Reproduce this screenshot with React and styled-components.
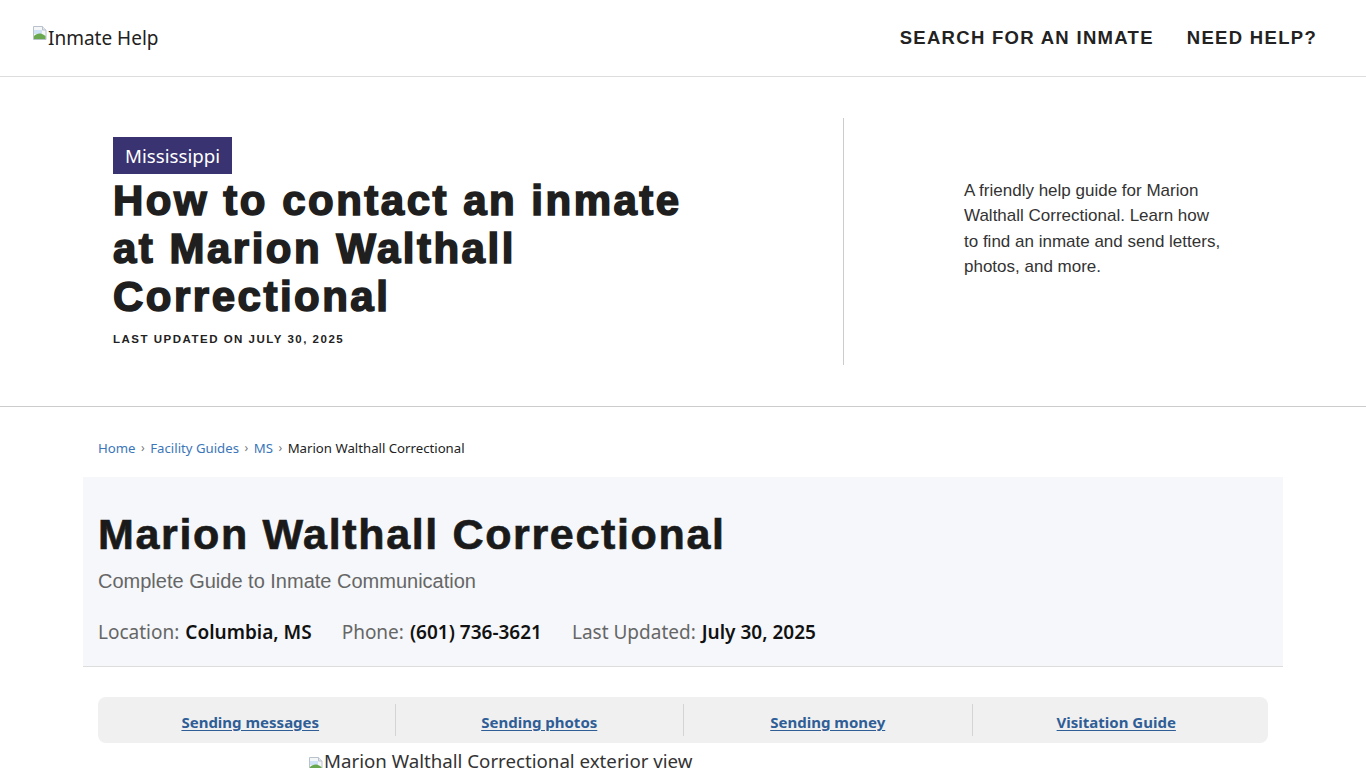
import React from "react";
import styled, { createGlobalStyle } from "styled-components";

const Global = createGlobalStyle`
  * { box-sizing: border-box; }
  html, body { margin: 0; padding: 0; background: #fff; }
  body { font-family: "Noto Sans", "Open Sans", sans-serif; color: #222; overflow: hidden; }
`;

const SEGOE = `"Noto Sans", "Open Sans", sans-serif`;
const ARIAL = `"Liberation Sans", Arial, sans-serif`;

const Header = styled.header`
  height: 77px;
  border-bottom: 1px solid #ddd;
  display: flex;
  align-items: center;
  justify-content: space-between;
  padding: 0 49px 0 32px;
`;

const Logo = styled.a`
  display: flex;
  align-items: flex-start;
  font-family: ${SEGOE};
  font-size: 19px;
  color: #222;
  text-decoration: none;
  margin-top: -1px;
`;

const Nav = styled.nav`
  display: flex;
  gap: 33px;
`;

const NavLink = styled.a`
  font-family: ${ARIAL};
  font-weight: 700;
  font-size: 18.5px;
  letter-spacing: 1.3px;
  color: #222;
  text-decoration: none;
  text-transform: uppercase;
`;

const Hero = styled.section`
  border-bottom: 1px solid #ccc;
  padding: 41px 0 41px;
`;

const HeroInner = styled.div`
  width: 1140px;
  margin: 0 auto;
  display: grid;
  grid-template-columns: 731px 1fr;
  min-height: 247px;
`;

const HeroLeft = styled.div`
  display: flex;
  flex-direction: column;
  justify-content: center;
  align-items: flex-start;
  border-right: 1px solid #ccc;
`;

const Tag = styled.span`
  background: #3a3371;
  color: #fff;
  font-family: ${SEGOE};
  font-size: 18.7px;
  padding: 0 12px 0 12px;
  height: 37px;
  line-height: 37px;
`;

const HeroTitle = styled.h1`
  margin: 3px 0 0;
  font-family: ${ARIAL};
  font-weight: 700;
  font-size: 42px;
  line-height: 48px;
  letter-spacing: 2.5px;
  -webkit-text-stroke: 1.6px #1f1f1f;
  color: #1f1f1f;
  width: 610px;
`;

const Updated = styled.div`
  margin-top: 11px;
  font-family: ${ARIAL};
  font-weight: 700;
  font-size: 11.5px;
  line-height: 14px;
  letter-spacing: 1.5px;
  color: #222;
  text-transform: uppercase;
`;

const HeroRight = styled.div`
  display: flex;
  align-items: center;
  padding-left: 120px;
`;

const HeroText = styled.p`
  margin: 0 0 26px;
  font-family: ${ARIAL};
  font-size: 17px;
  line-height: 25.5px;
  color: #333;
  width: 260px;
`;

const Main = styled.main`
  width: 1200px;
  margin: 0 auto;
`;

const Crumbs = styled.nav`
  padding: 32px 15px 0;
  height: 70px;
  font-family: ${SEGOE};
  font-size: 13.2px;
  color: #222;
  display: flex;
  gap: 5.5px;
  align-items: flex-start;
`;

const Crumb = styled.a`
  color: #3b76b8;
  text-decoration: none;
`;

const Sep = styled.span`
  color: #777;
  font-size: 12px;
`;

const Card = styled.div`
  background: #f5f7fa;
  border-bottom: 1px solid #ddd;
  padding: 33px 15px 19px;
`;

const Title = styled.h2`
  margin: 0;
  font-family: ${ARIAL};
  font-weight: 700;
  font-size: 43px;
  line-height: 48px;
  letter-spacing: 1.65px;
  -webkit-text-stroke: 0.7px #1a1a1a;
  color: #1a1a1a;
`;

const Subtitle = styled.p`
  margin: 9px 0 0;
  font-family: ${ARIAL};
  font-size: 20px;
  line-height: 28px;
  color: #666;
`;

const Meta = styled.div`
  display: flex;
  gap: 30px;
  margin-top: 22px;
  font-family: ${SEGOE};
  font-size: 19px;
  line-height: 30px;
`;

const MetaItem = styled.div`
  display: flex;
  gap: 6px;
`;

const MetaLabel = styled.span`
  color: #666;
`;

const MetaValue = styled.span`
  color: #111;
  font-weight: 600;
`;

const Tabs = styled.div`
  margin: 30px 15px 0;
  background: #f0f0f0;
  border-radius: 8px;
  height: 46px;
  display: grid;
  grid-template-columns: repeat(4, 1fr);
  align-items: center;
  padding: 7px 8px;
`;

const Tab = styled.div`
  display: flex;
  justify-content: center;
  align-items: center;
  height: 100%;
  border-left: ${(p) => (p.$first ? "none" : "1px solid #d4d4d4")};
`;

const TabLink = styled.a`
  font-family: ${SEGOE};
  font-weight: 700;
  font-size: 15px;
  color: #2f5e96;
  text-decoration: underline;
  text-underline-offset: 2px;
  margin-top: 4px;
`;

const Figure = styled.div`
  margin: 8px 0 0 225px;
  display: flex;
  align-items: flex-start;
  font-family: ${SEGOE};
  font-size: 18.7px;
  color: #333;
  line-height: 20px;
`;

const IconSlot = styled.span`
  display: inline-flex;
  margin-top: 5px;
  flex-shrink: 0;
`;

const BrokenImg = () => (
  <svg width="16" height="16" viewBox="0 0 16 16">
    <path d="M1.5 1.5h9l3.5 3.5v9.5h-12.5z" fill="#f4f6f8" stroke="#b9c2cc" />
    <path d="M10.5 1.5v3.5h3.5" fill="#e4e8ec" stroke="#b9c2cc" />
    <path d="M2 5h8v4H2z" fill="#cfe1f5" />
    <path d="M2 14V11c2-2 5-3 8-2 1.5.5 2.5 1.3 3.5 2v3z" fill="#6aa84f" />
  </svg>
);

const tabs = ["Sending messages", "Sending photos", "Sending money", "Visitation Guide"];

export default function App() {
  return (
    <>
      <Global />
      <Header>
        <Logo href="#">
          <BrokenImg />
          <span>Inmate Help</span>
        </Logo>
        <Nav>
          <NavLink href="#">Search for an inmate</NavLink>
          <NavLink href="#">Need help?</NavLink>
        </Nav>
      </Header>
      <Hero>
        <HeroInner>
          <HeroLeft>
            <Tag>Mississippi</Tag>
            <HeroTitle>How to contact an inmate at Marion Walthall Correctional</HeroTitle>
            <Updated>Last updated on July 30, 2025</Updated>
          </HeroLeft>
          <HeroRight>
            <HeroText>
              A friendly help guide for Marion Walthall Correctional. Learn how to find an
              inmate and send letters, photos, and more.
            </HeroText>
          </HeroRight>
        </HeroInner>
      </Hero>
      <Main>
        <Crumbs>
          <Crumb href="#">Home</Crumb>
          <Sep>›</Sep>
          <Crumb href="#">Facility Guides</Crumb>
          <Sep>›</Sep>
          <Crumb href="#">MS</Crumb>
          <Sep>›</Sep>
          <span>Marion Walthall Correctional</span>
        </Crumbs>
        <Card>
          <Title>Marion Walthall Correctional</Title>
          <Subtitle>Complete Guide to Inmate Communication</Subtitle>
          <Meta>
            <MetaItem>
              <MetaLabel>Location:</MetaLabel>
              <MetaValue>Columbia, MS</MetaValue>
            </MetaItem>
            <MetaItem>
              <MetaLabel>Phone:</MetaLabel>
              <MetaValue>(601) 736-3621</MetaValue>
            </MetaItem>
            <MetaItem>
              <MetaLabel>Last Updated:</MetaLabel>
              <MetaValue>July 30, 2025</MetaValue>
            </MetaItem>
          </Meta>
        </Card>
        <Tabs>
          {tabs.map((t, i) => (
            <Tab key={t} $first={i === 0}>
              <TabLink href="#">{t}</TabLink>
            </Tab>
          ))}
        </Tabs>
        <Figure>
          <IconSlot>
            <BrokenImg />
          </IconSlot>
          <span>Marion Walthall Correctional exterior view</span>
        </Figure>
      </Main>
    </>
  );
}
